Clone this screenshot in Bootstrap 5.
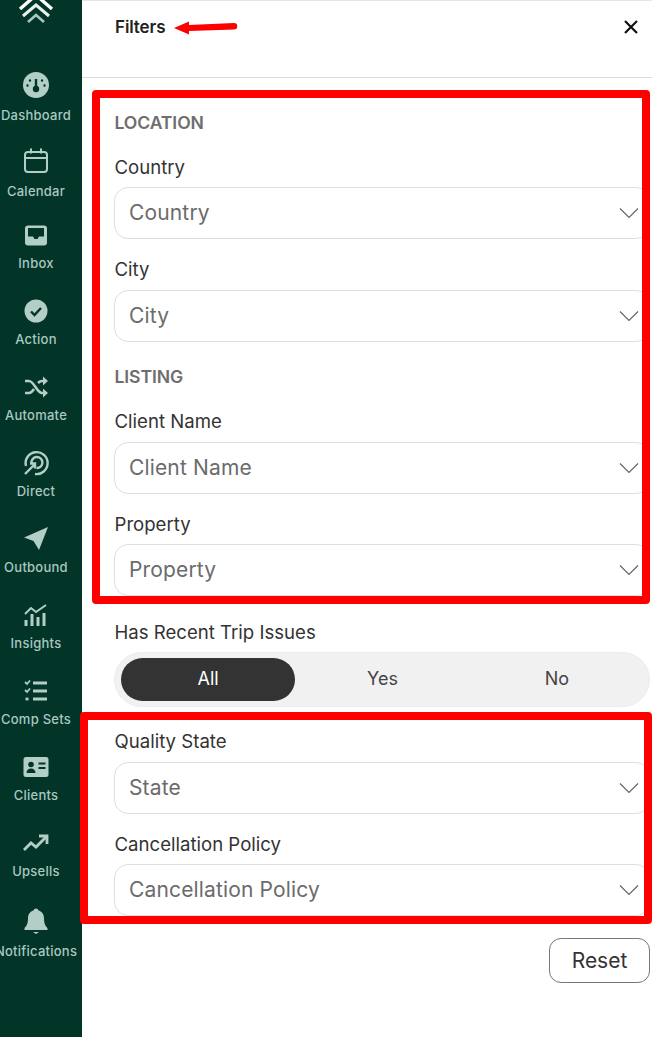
<!DOCTYPE html>
<html lang="en">
<head>
    <meta charset="UTF-8">
    <meta name="viewport" content="width=device-width, initial-scale=1.0">
    <title>Filters</title>
    <link href="https://cdn.jsdelivr.net/npm/bootstrap@5.3.0/dist/css/bootstrap.min.css" rel="stylesheet">
    <style>
        html, body { height: 1037px; overflow: hidden; }
        body { font-family: Inter, "Noto Sans", sans-serif; color: #333; background: #fff; }
        .page-wrap { height: 1037px; position: relative; overflow: hidden; }
        .side-rail { width: 82px; flex: 0 0 82px; background: #023428; color: #a9c8c0; padding: 71px 10px 0 0; position: relative; overflow: hidden; }
        .rail-logo { position: absolute; left: 16px; top: -6px; }
        .rail-item { height: 76px; display: flex; flex-direction: column; align-items: center; font-size: 13px; font-weight: 500; line-height: 16px; white-space: nowrap; letter-spacing: .25px; }
        .rail-item svg { display: block; flex: none; margin-bottom: 8px; }
        .rail-item.tight svg { margin-bottom: 6px; }
        .rail-item.short { height: 74px; }
        .rail-item.long { height: 78px; }
        .filter-panel { flex: 1 1 auto; min-width: 0; border-top: 1px solid #e6e6e6; }
        .panel-head { height: 77px; border-bottom: 1px solid #dcdcdc; padding: 15px 14px 0 33px; }
        .panel-title { font-size: 17px; font-weight: 600; color: #222; line-height: 22px; letter-spacing: -.1px; }
        .close-x { width: 14px; height: 14px; display: block; margin-top: 4px; }
        .panel-body { padding: 34px 2px 0 32px; }
        .group-title { font-size: 17.6px; font-weight: 600; color: #6e6e6e; line-height: 22px; margin-bottom: 21.5px; padding-left: .5px; letter-spacing: -.1px; }
        .group-title.second { margin-bottom: 22.5px; }
        .field-box { margin-bottom: 19px; }
        .field-box.gap-group { margin-bottom: 24px; }
        .field-box.gap-seg { margin-bottom: 24.5px; }
        .field-box.gap-foot { margin-bottom: 22px; }
        .field-label { font-size: 18.6px; line-height: 22px; margin-bottom: 9.5px; padding-left: .5px; display: block; color: #333; }
        .form-select.filter-select { height: 52px; border: 1px solid #dedede; border-radius: 14px; font-size: 21px; color: #6b6b6b; padding: 0 40px 0 14px; letter-spacing: .15px; box-shadow: none; background-size: 20px 12px; background-position: right 10px center;
            background-image: url("data:image/svg+xml,%3csvg xmlns='http://www.w3.org/2000/svg' viewBox='0 0 20 12'%3e%3cpath fill='none' stroke='%23666' stroke-width='1.2' d='M1 1.5l9 9 9-9'/%3e%3c/svg%3e"); }
        .seg-track { height: 55px; background: #f1f1f1; border: 1px solid #ececec; border-radius: 28px; padding: 5px 5px 5px 6px; margin-bottom: 23px; }
        .seg-btn { flex: 1 1 0; border: 0; border-radius: 22px; font-size: 18px; color: #444; padding: 0 0 2px; background: transparent; }
        .seg-btn.active { background: #333; color: #fff; }
        .reset-btn { width: 101px; height: 45px; border: 1px solid #777; border-radius: 12px; font-size: 21px; color: #333; background: #fff; padding: 1px 0 0; }
        .mark-box { position: absolute; border: 8px solid #f00; border-radius: 4px; pointer-events: none; }
        .mark-one { left: 92px; top: 90px; width: 558px; height: 514px; }
        .mark-two { left: 80px; top: 712px; width: 572px; height: 212px; }
        .mark-arrow { position: absolute; left: 174px; top: 20px; }
    </style>
</head>
<body>
    <div class="page-wrap d-flex">
        <!-- Left nav -->
        <nav class="side-rail">
            <svg class="rail-logo" width="40" height="32" viewBox="0 0 40 32" fill="none">
                <path d="M4 15L20 1l16 14" stroke="#fff" stroke-width="3.4"/>
                <path d="M7 22L20 11l13 11" stroke="#e8f1ee" stroke-width="3"/>
                <path d="M12 28l8-7 8 7" stroke="#a9c6bf" stroke-width="2.6"/>
            </svg>
            <div class="rail-item">
                <svg width="28" height="28" viewBox="0 0 28 28"><circle cx="14" cy="14" r="13" fill="#b2cec7"/><circle cx="14" cy="18" r="3.2" fill="#023428"/><path d="M14 8v9" stroke="#023428" stroke-width="2.4"/><path d="M8 9.5v.1M20 9.5v.1M5.5 14.5v.1M22.5 14.5v.1" stroke="#023428" stroke-width="2.4" stroke-linecap="round"/></svg>
                Dashboard
            </div>
            <div class="rail-item short">
                <svg width="28" height="28" viewBox="0 0 28 28" fill="none" stroke="#b2cec7" stroke-width="2"><rect x="3" y="5" width="22" height="20" rx="3"/><path d="M3 11h22M9 1.5v5M19 1.5v5"/></svg>
                Calendar
            </div>
            <div class="rail-item tight">
                <svg width="28" height="28" viewBox="0 0 28 28"><path d="M6 4.500h16a3 3 0 0 1 3 3v14a3 3 0 0 1-3 3H6a3 3 0 0 1-3-3v-14a3 3 0 0 1 3-3z" fill="#b2cec7"/><path d="M6 7h16v8.500h-5l-1.500 2.500h-3L11 15.500H6z" fill="#023428"/></svg>
                Inbox
            </div>
            <div class="rail-item tight">
                <svg width="28" height="28" viewBox="0 0 28 28"><circle cx="14" cy="14" r="11.5" fill="#b2cec7"/><path d="M9 14.500l3.500 3.500L19 11" fill="none" stroke="#023428" stroke-width="2.4"/></svg>
                Action
            </div>
            <div class="rail-item tight">
                <svg width="28" height="28" viewBox="0 0 28 28" fill="none" stroke="#b2cec7" stroke-width="2.6"><path d="M3 8h4c5 0 8 12 13 12h3M3 20h4c2 0 3.500-1.800 5-4M16 10c1.200-1.200 2.500-2 4-2h3"/><path d="M21 3.500l5 4.500-5 4.500zM21 15.500l5 4.500-5 4.500z" fill="#b2cec7" stroke="none"/></svg>
                Automate
            </div>
            <div class="rail-item tight">
                <svg width="28" height="28" viewBox="0 0 28 28" fill="none" stroke="#b2cec7" stroke-width="2.4"><path d="M4 17A11 11 0 1 1 13 25"/><path d="M9.500 14.500A5.500 5.500 0 1 1 14.500 19"/><path d="M3 25l10-10M8 14.500h5v5"/></svg>
                Direct
            </div>
            <div class="rail-item tight">
                <svg width="28" height="28" viewBox="0 0 28 28"><path d="M26 2L2 12.500l9.500 3.500L17 25z" fill="#b2cec7"/></svg>
                Outbound
            </div>
            <div class="rail-item tight">
                <svg width="28" height="28" viewBox="0 0 28 28" fill="none" stroke="#b2cec7"><path d="M3 13l6-6 5 4 10-7" stroke-width="2"/><path d="M4 25v-6M10 25V13M16 25v-9M22 25V12" stroke-width="3"/></svg>
                Insights
            </div>
            <div class="rail-item tight">
                <svg width="28" height="28" viewBox="0 0 28 28" fill="none" stroke="#b2cec7" stroke-width="2.8"><path d="M11 6h14M11 14h14M11 22h14"/><path d="M3 5l2 2 3-3.500M3 13l2 2 3-3.500" stroke-width="1.8"/><path d="M3.500 22h3"/></svg>
                Comp Sets
            </div>
            <div class="rail-item tight">
                <svg width="28" height="28" viewBox="0 0 28 28"><rect x="1.500" y="4" width="25" height="20" rx="2.500" fill="#b2cec7"/><circle cx="9" cy="11.500" r="2.800" fill="#023428"/><path d="M4.500 20c0-3 2-4.500 4.500-4.500s4.500 1.500 4.500 4.500z" fill="#023428"/><path d="M16.500 10.500h7M16.500 15h7" stroke="#023428" stroke-width="2"/></svg>
                Clients
            </div>
            <div class="rail-item tight long">
                <svg width="28" height="28" viewBox="0 0 28 28" fill="none" stroke="#b2cec7" stroke-width="2.8"><path d="M2 21l7-7 5 4 10-10"/><path d="M17 7h8v8"/></svg>
                Upsells
            </div>
            <div class="rail-item">
                <svg width="28" height="28" viewBox="0 0 28 28"><path d="M14 1.500c1.300 0 2 .8 2.200 1.800C20 4.300 22 7.500 22 11c0 6 1.500 8 3.500 10v2h-23v-2C4.500 19 6 17 6 11c0-3.500 2-6.700 5.800-7.700C12 2.300 12.700 1.500 14 1.500z" fill="#b2cec7"/><path d="M11 25h6l-3 2z" fill="#b2cec7"/></svg>
                Notifications
            </div>
        </nav>

        <!-- Filter panel -->
        <main class="filter-panel">
            <div class="panel-head d-flex justify-content-between align-items-start">
                <div class="panel-title">Filters</div>
                <svg class="close-x" viewBox="0 0 14 14" fill="none" stroke="#111" stroke-width="2.2"><path d="M1 1l12 12M13 1L1 13"/></svg>
            </div>
            <div class="panel-body">
                <div class="group-title">LOCATION</div>
                <div class="field-box">
                    <label class="field-label">Country</label>
                    <select class="form-select filter-select"><option>Country</option></select>
                </div>
                <div class="field-box gap-group">
                    <label class="field-label">City</label>
                    <select class="form-select filter-select"><option>City</option></select>
                </div>
                <div class="group-title second">LISTING</div>
                <div class="field-box">
                    <label class="field-label">Client Name</label>
                    <select class="form-select filter-select"><option>Client Name</option></select>
                </div>
                <div class="field-box gap-seg">
                    <label class="field-label">Property</label>
                    <select class="form-select filter-select"><option>Property</option></select>
                </div>
                <label class="field-label">Has Recent Trip Issues</label>
                <div class="seg-track d-flex">
                    <button class="seg-btn active" type="button">All</button>
                    <button class="seg-btn" type="button">Yes</button>
                    <button class="seg-btn" type="button">No</button>
                </div>
                <div class="field-box">
                    <label class="field-label">Quality State</label>
                    <select class="form-select filter-select"><option>State</option></select>
                </div>
                <div class="field-box gap-foot">
                    <label class="field-label">Cancellation Policy</label>
                    <select class="form-select filter-select"><option>Cancellation Policy</option></select>
                </div>
                <div class="d-flex justify-content-end">
                    <button class="reset-btn" type="button">Reset</button>
                </div>
            </div>
        </main>

        <!-- Red annotations drawn on top of the screenshot -->
        <div class="mark-box mark-one"></div>
        <div class="mark-box mark-two"></div>
        <svg class="mark-arrow" width="64" height="16" viewBox="0 0 64 16"><path d="M0 8l15-6.500V5l45-2a3 3 0 0 1 0 6.500L15 11v3.500z" fill="#f00"/></svg>
    </div>
    <script src="https://cdn.jsdelivr.net/npm/bootstrap@5.3.0/dist/js/bootstrap.bundle.min.js"></script>
</body>
</html>
